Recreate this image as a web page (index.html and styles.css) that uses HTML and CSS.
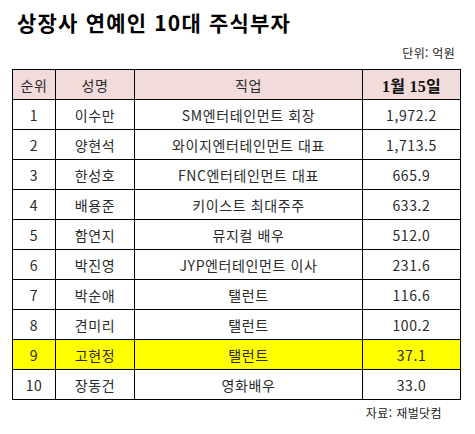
FILE: index.html
```html
<!DOCTYPE html>
<html lang="ko">
<head>
<meta charset="utf-8">
<link rel="stylesheet" href="styles.css">
</head>
<body>
<div class="page">
  <h1 class="title">상장사 연예인 10대 주식부자</h1>
  <div class="unit">단위: 억원</div>
  <table class="rank">
    <colgroup>
      <col class="c1"><col class="c2"><col class="c3"><col class="c4">
    </colgroup>
    <thead>
      <tr><th>순위</th><th>성명</th><th>직업</th><th class="date">1월 15일</th></tr>
    </thead>
    <tbody>
      <tr><td>1</td><td>이수만</td><td>SM엔터테인먼트 회장</td><td>1,972.2</td></tr>
      <tr><td>2</td><td>양현석</td><td>와이지엔터테인먼트 대표</td><td>1,713.5</td></tr>
      <tr><td>3</td><td>한성호</td><td>FNC엔터테인먼트 대표</td><td>665.9</td></tr>
      <tr><td>4</td><td>배용준</td><td>키이스트 최대주주</td><td>633.2</td></tr>
      <tr><td>5</td><td>함연지</td><td>뮤지컬 배우</td><td>512.0</td></tr>
      <tr><td>6</td><td>박진영</td><td>JYP엔터테인먼트 이사</td><td>231.6</td></tr>
      <tr><td>7</td><td>박순애</td><td>탤런트</td><td>116.6</td></tr>
      <tr><td>8</td><td>견미리</td><td>탤런트</td><td>100.2</td></tr>
      <tr class="hl"><td>9</td><td>고현정</td><td>탤런트</td><td>37.1</td></tr>
      <tr><td>10</td><td>장동건</td><td>영화배우</td><td>33.0</td></tr>
    </tbody>
  </table>
  <div class="source">자료: 재벌닷컴</div>
</div>
</body>
</html>
```
FILE: styles.css
```css
html, body {
  margin: 0;
  padding: 0;
  background: #ffffff;
}
body {
  font-family: "Noto Sans CJK KR", "Noto Sans", sans-serif;
  color: #1a1a1a;
}
.page {
  width: 475px;
  height: 434px;
  padding: 0 0 0 12px;
  box-sizing: border-box;
}
.title {
  margin: 0;
  padding: 8px 0 0 5px;
  height: 36px;
  box-sizing: border-box;
  font-size: 21px;
  line-height: 28px;
  font-weight: 700;
  color: #000;
  letter-spacing: 1.2px;
}
.unit {
  width: 443px;
  text-align: right;
  font-size: 12px;
  line-height: 33px;
  height: 33px;
  color: #222;
  letter-spacing: 0.3px;
}
.rank {
  border-collapse: collapse;
  width: 448px;
  table-layout: fixed;
}
.c1 { width: 43px; }
.c2 { width: 79px; }
.c3 { width: 228px; }
.c4 { width: 98px; }
.rank th, .rank td {
  border: 1px solid #000;
  height: 29px;
  padding: 0;
  text-align: center;
  vertical-align: middle;
  font-size: 14px;
  font-weight: 400;
  color: #2a2a2a;
  letter-spacing: 0.6px;
}
.rank th {
  background: #f2dcdb;
}
.rank th.date {
  font-family: "Liberation Serif", "Noto Sans CJK KR", serif;
  font-weight: 700;
  font-size: 16px;
  color: #111;
  letter-spacing: 0.3px;
}
.rank tr.hl td {
  background: #ffff00;
}
.source {
  width: 430px;
  text-align: right;
  font-size: 12px;
  line-height: 26px;
  color: #222;
  letter-spacing: 0.4px;
}
```
